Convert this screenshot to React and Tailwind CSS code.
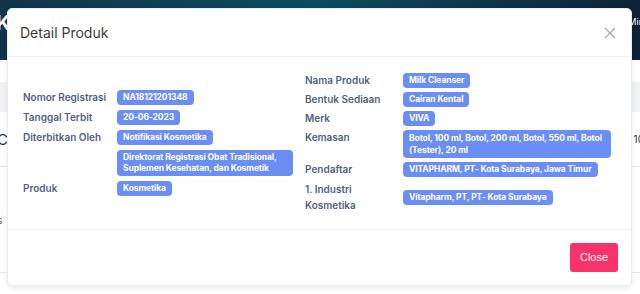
import React from "react";

const badgeCls =
  "inline-block rounded-[4px] bg-[#6b8ef5] px-[6px] py-[2px] text-[8.5px] font-bold leading-[11px] tracking-[-0.1px] text-white";

const Badge = ({ children, className = "" }) => <span className={`${badgeCls} ${className}`}>{children}</span>;

const Row = ({ label, children, align = "items-start", labelW = "w-[94px]" }) => (
  <div className={`flex ${align} leading-none`}>
    <div className={`${labelW} shrink-0 text-[10px] font-semibold leading-[15px] text-[#525f7f]`}>{label}</div>
    <div className="flex flex-1">{children}</div>
  </div>
);

export default function App() {
  return (
    <div
      className="relative h-[294px] w-[640px] overflow-hidden bg-white"
      style={{ fontFamily: "Inter, 'Noto Sans', sans-serif" }}
    >
      {/* background page */}
      <div className="flex h-[60px] items-center justify-between bg-gradient-to-r from-[#10344a] via-[#0b4b5c] to-[#0c2236]">
        <span className="-ml-[4px] -mt-[14px] text-[20px] font-bold leading-none text-white">K</span>
        <span className="-mr-[4px] -mt-[18px] text-[9px] leading-none text-white">Min</span>
      </div>
      <div className="mt-[22px] h-[30px] bg-[#f2f3f5]" />
      <div className="flex h-[55px] items-center justify-between border-b border-[#e6e8eb]">
        <span className="-ml-[3px] text-[15px] leading-none text-[#1e3a5f]">C</span>
        <span className="-mr-[4px] text-[10px] leading-none text-[#333]">10</span>
      </div>
      <div className="flex h-[106px] items-center border-b border-[#e6e8eb]">
        <span className="-ml-[3px] text-[10px] leading-none text-[#555]">s</span>
      </div>

      {/* modal */}
      <div className="absolute left-[7px] top-[8px] flex w-[625px] flex-col rounded-[5px] border border-[#e9ecef] bg-white shadow-[0_2px_6px_rgba(0,0,0,0.08)]">
        <div className="flex h-[48px] items-center justify-between border-b border-[#eef0f2] pl-[12px] pr-[14px]">
          <span className="text-[14px] leading-none text-[#3b3b3b]">Detail Produk</span>
          <svg width="12" height="12" viewBox="0 0 12 12" className="mr-[1px]">
            <path d="M1 1L11 11M11 1L1 11" stroke="#a9a9a9" strokeWidth="1.2" fill="none" />
          </svg>
        </div>
        <div className="flex items-center py-[16px] pl-[15px] pr-[16px]">
          <div className="flex w-[282px] shrink-0 flex-col gap-[5px] pr-[4px]">
            <Row label="Nomor Registrasi"><Badge>NA18121201348</Badge></Row>
            <Row label="Tanggal Terbit"><Badge>20-06-2023</Badge></Row>
            <Row label="Diterbitkan Oleh"><Badge>Notifikasi Kosmetika</Badge></Row>
            <Row label="">
              <Badge className="w-[176px]">
                Direktorat Registrasi Obat Tradisional,
                <br />
                Suplemen Kesehatan, dan Kosmetik
              </Badge>
            </Row>
            <Row label="Produk"><Badge>Kosmetika</Badge></Row>
          </div>
          <div className="flex flex-1 flex-col gap-[4px]">
            <Row label="Nama Produk" labelW="w-[98px]"><Badge>Milk Cleanser</Badge></Row>
            <Row label="Bentuk Sediaan" labelW="w-[98px]"><Badge>Cairan Kental</Badge></Row>
            <Row label="Merk" labelW="w-[98px]"><Badge>VIVA</Badge></Row>
            <Row label="Kemasan" labelW="w-[98px]">
              <Badge className="!leading-[12px] w-[208px]">
                Botol, 100 ml, Botol, 200 ml, Botol, 550 ml, Botol
                <br />
                (Tester), 20 ml
              </Badge>
            </Row>
            <Row label="Pendaftar" labelW="w-[98px]"><Badge>VITAPHARM, PT- Kota Surabaya, Jawa Timur</Badge></Row>
            <div className="flex items-center leading-none">
              <div className="w-[98px] shrink-0 text-[10px] font-semibold leading-[16px] text-[#525f7f]">
                1. Industri
                <br />
                Kosmetika
              </div>
              <div className="flex flex-1"><Badge>Vitapharm, PT, PT- Kota Surabaya</Badge></div>
            </div>
          </div>
        </div>
        <div className="flex h-[56px] items-center justify-end border-t border-[#eef0f2] pr-[13px]">
          <button
            className="h-[29px] w-[48px] rounded-[3px] bg-[#f8336c] text-[11px] leading-none text-white"
            style={{ fontFamily: "'Liberation Sans', Arial, sans-serif" }}
          >
            Close
          </button>
        </div>
      </div>
    </div>
  );
}
